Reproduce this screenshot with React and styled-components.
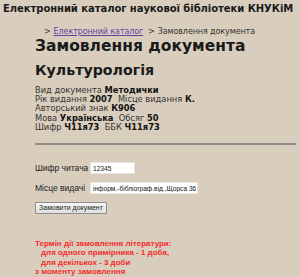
import React from 'react';
import styled, { createGlobalStyle } from 'styled-components';

const GlobalStyle = createGlobalStyle`
  html, body {
    margin: 0;
    padding: 0;
    background: #d9cebd;
  }
  body {
    font-family: 'DejaVu Sans', Verdana, sans-serif;
    color: #1a1a1a;
  }
`;

const Page = styled.div`
  width: 300px;
  height: 277px;
  overflow: hidden;
  background: #d9cebd;
`;

const SiteTitle = styled.div`
  padding: 3px 0 0 3px;
  font-size: 10px;
  font-weight: bold;
  line-height: 12px;
  letter-spacing: -0.05px;
`;

const Content = styled.div`
  padding: 12px 4px 0 35px;
`;

const Crumbs = styled.div`
  padding-left: 9px;
  font-size: 8px;
  line-height: 10px;
  color: #333;
  letter-spacing: -0.1px;

  a {
    color: #6b3fa0;
    text-decoration: underline;
  }
  span.sep {
    margin-right: 3px;
  }
`;

const Heading = styled.h1`
  margin: 0;
  font-size: 15.5px;
  line-height: 19px;
  font-weight: bold;
`;

const DocTitle = styled.h2`
  margin: 5px 0 0;
  font-size: 14.2px;
  line-height: 18px;
  font-weight: bold;
`;

const Details = styled.div`
  margin-top: 7px;
  font-size: 8.3px;
  line-height: 9.2px;
  color: #333;

  b {
    color: #111;
  }
`;

const Rule = styled.hr`
  margin: 11px 0 0;
  border: 0;
  border-top: 2px solid #8c8c88;
`;

const Form = styled.form`
  margin-top: 17px;
  display: flex;
  flex-direction: column;
  gap: 8px;
  align-items: flex-start;
`;

const Field = styled.label`
  display: flex;
  align-items: center;
  font-family: 'Liberation Sans', Arial, sans-serif;
  font-size: 8.5px;
  color: #222;
  white-space: nowrap;
`;

const FieldName = styled.span`
  width: 55px;
`;

const Input = styled.input`
  box-sizing: border-box;
  width: ${p => p.$w}px;
  height: 12px;
  padding: 0 1px 0 2px;
  border: 1px solid #e4e4e4;
  background: #fff;
  font-family: 'Liberation Sans', Arial, sans-serif;
  font-size: 6.6px;
  color: #111;
  outline: none;
`;

const Button = styled.button`
  height: 12px;
  width: 72px;
  padding: 0;
  border: 1px solid #8e8e8e;
  border-radius: 1px;
  background: linear-gradient(180deg, #f6f6f6 0%, #e0e0e0 100%);
  font-family: 'Liberation Sans', Arial, sans-serif;
  font-size: 7px;
  color: #222;
  line-height: 10px;
`;

const Notice = styled.div`
  margin-top: 25px;
  color: #f42c2c;
  font-family: 'Liberation Sans', Arial, sans-serif;
  font-size: 8px;
  font-weight: bold;
  line-height: 9.3px;
`;

const Indent = styled.div`
  padding-left: 6px;
`;

export default function App() {
  return (
    <Page>
      <GlobalStyle />
      <SiteTitle>Електронний каталог наукової бібліотеки КНУКіМ</SiteTitle>
      <Content>
        <Crumbs>
          <span className="sep">&gt;</span>
          <a href="#">Електронний каталог</a>
          <span className="sep">&nbsp;&nbsp;&gt;</span>
          Замовлення документа
        </Crumbs>
        <Heading>Замовлення документа</Heading>
        <DocTitle>Культурологія</DocTitle>
        <Details>
          <div>Вид документа <b>Методички</b></div>
          <div>Рік видання <b>2007</b>&nbsp; Місце видання <b>К.</b></div>
          <div>Авторський знак <b>К906</b></div>
          <div>Мова <b>Українська</b>&nbsp; Обсяг <b>50</b></div>
          <div>Шифр <b>Ч11я73</b>&nbsp; ББК <b>Ч11я73</b></div>
        </Details>
        <Rule />
        <Form onSubmit={e => e.preventDefault()}>
          <Field>
            <FieldName>Шифр читача</FieldName>
            <Input $w={45} defaultValue="12345" />
          </Field>
          <Field>
            <FieldName>Місце видачі</FieldName>
            <Input $w={108} defaultValue="інформ.-бібліограф.від.,Щорса 36" />
          </Field>
          <Button type="submit">Замовити документ</Button>
        </Form>
        <Notice>
          <div>Термін дії замовлення літератури:</div>
          <Indent>для одного примірника - 1 доба,</Indent>
          <Indent>для декількох - 3 доби</Indent>
          <div>з моменту замовлення</div>
        </Notice>
      </Content>
    </Page>
  );
}
